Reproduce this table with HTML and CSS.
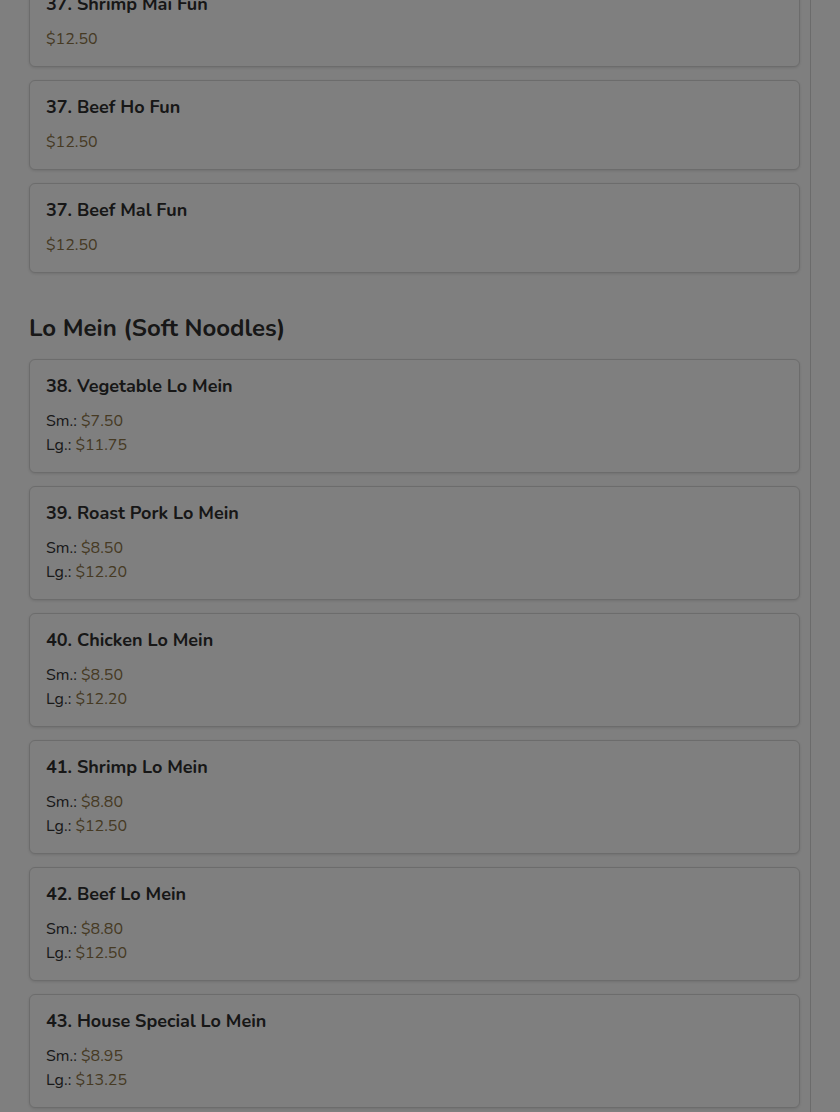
FILE: index.html
```html
<!DOCTYPE html>
<html lang="en">
<head>
<meta charset="utf-8">
<link rel="stylesheet" href="styles.css">
<title>Menu</title>
</head>
<body>
<div class="layout">
  <main class="menu">
    <div class="card"><h3 class="name">37. Shrimp Mai Fun</h3><div class="price-line"><span class="price">$12.50</span></div></div>
    <div class="card"><h3 class="name">37. Beef Ho Fun</h3><div class="price-line"><span class="price">$12.50</span></div></div>
    <div class="card"><h3 class="name">37. Beef Mal Fun</h3><div class="price-line"><span class="price">$12.50</span></div></div>

    <h2 class="section-title">Lo Mein (Soft Noodles)</h2>

    <div class="card"><h3 class="name">38. Vegetable Lo Mein</h3><div class="price-line">Sm.: <span class="price">$7.50</span></div><div class="price-line">Lg.: <span class="price">$11.75</span></div></div>
    <div class="card"><h3 class="name">39. Roast Pork Lo Mein</h3><div class="price-line">Sm.: <span class="price">$8.50</span></div><div class="price-line">Lg.: <span class="price">$12.20</span></div></div>
    <div class="card"><h3 class="name">40. Chicken Lo Mein</h3><div class="price-line">Sm.: <span class="price">$8.50</span></div><div class="price-line">Lg.: <span class="price">$12.20</span></div></div>
    <div class="card"><h3 class="name">41. Shrimp Lo Mein</h3><div class="price-line">Sm.: <span class="price">$8.80</span></div><div class="price-line">Lg.: <span class="price">$12.50</span></div></div>
    <div class="card"><h3 class="name">42. Beef Lo Mein</h3><div class="price-line">Sm.: <span class="price">$8.80</span></div><div class="price-line">Lg.: <span class="price">$12.50</span></div></div>
    <div class="card"><h3 class="name">43. House Special Lo Mein</h3><div class="price-line">Sm.: <span class="price">$8.95</span></div><div class="price-line">Lg.: <span class="price">$13.25</span></div></div>
  </main>
  <aside class="side"></aside>
</div>
<div class="overlay"></div>
</body>
</html>
```

FILE: styles.css
```css
html, body {
  margin: 0;
  padding: 0;
  background: #fff;
  height: 100%;
  overflow: hidden;
}
body {
  font-family: "Nunito", "Lato", "Open Sans", sans-serif;
  color: #333;
}
.layout {
  display: flex;
  align-items: flex-start;
}
.menu {
  width: 771px;
  padding: 0 10px 0 29px;
  border-right: 1px solid #d6d6d6;
  margin-top: -23px;
  min-height: 1200px;
}
.side {
  flex: 1;
}
.card {
  border: 1px solid #d9d9d9;
  border-radius: 6px;
  box-shadow: 0 1px 3px rgba(0,0,0,0.12);
  padding: 15px 16px 15px;
  margin-bottom: 13px;
  background: #fff;
}
.name {
  margin: 0 0 12px;
  font-size: 18px;
  line-height: 22px;
  font-weight: 700;
  color: #2e2e2e;
}
.price-line {
  font-size: 16px;
  line-height: 24px;
  color: #333;
}
.price {
  color: #8c7447;
}
.section-title {
  margin: 39px 0 15px;
  font-size: 24px;
  line-height: 32px;
  font-weight: 700;
  color: #2e2e2e;
}
.overlay {
  position: fixed;
  inset: 0;
  background: rgba(0,0,0,0.5);
}
```
